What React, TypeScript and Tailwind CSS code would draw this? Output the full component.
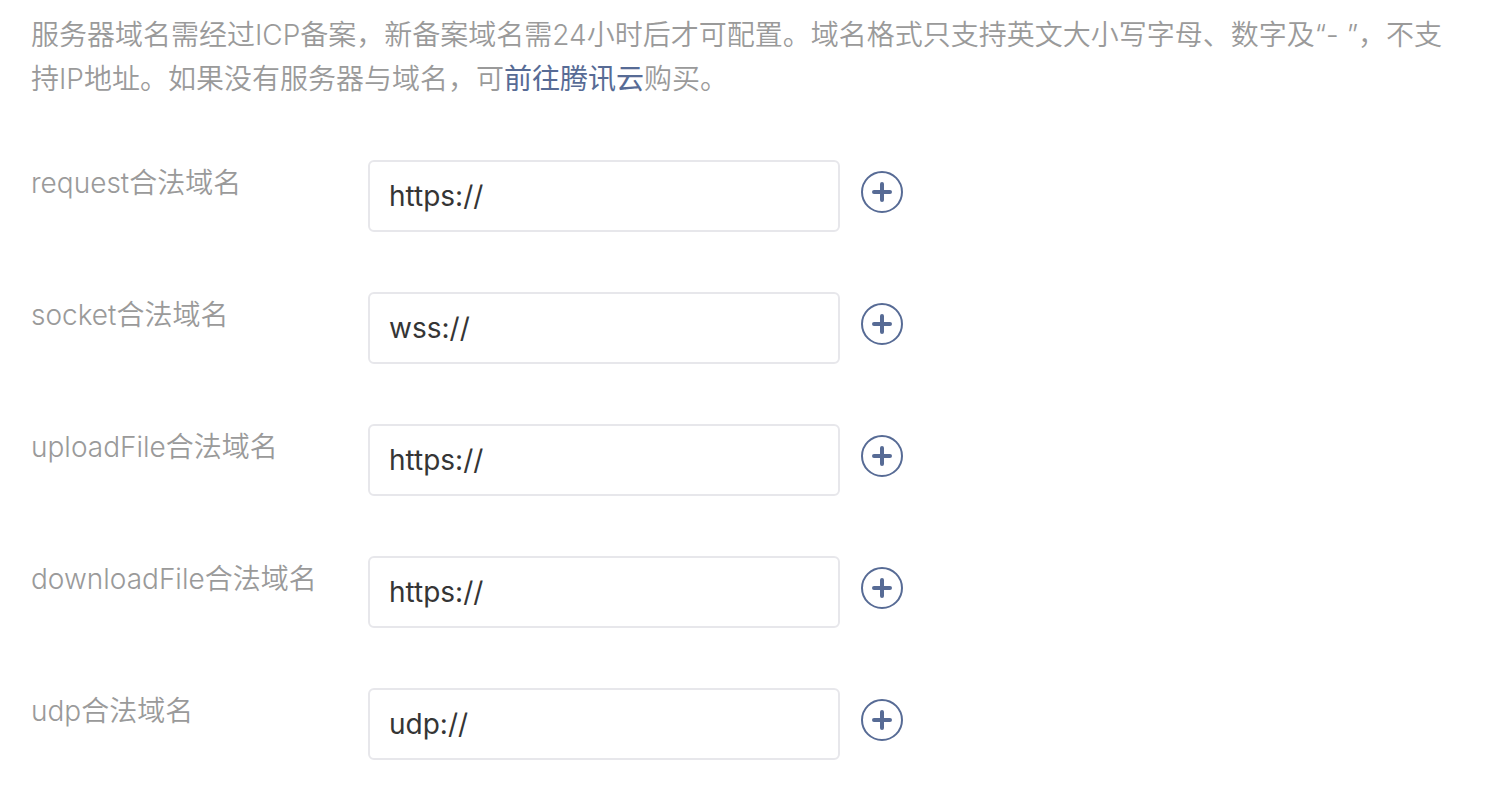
const domains = [
  { name: "request", value: "https://" },
  { name: "socket", value: "wss://" },
  { name: "uploadFile", value: "https://" },
  { name: "downloadFile", value: "https://" },
  { name: "udp", value: "udp://" },
];

function AddIcon() {
  return (
    <svg viewBox="0 0 42 42" className="size-[42px]" fill="none" stroke="currentColor" strokeLinecap="round" aria-hidden="true">
      <circle cx="21" cy="21" r="20" strokeWidth="2" />
      <path d="M21 13v16M13 21h16" strokeWidth="4" />
    </svg>
  );
}

function DomainRow({ name, value }: { name: string; value: string }) {
  return (
    <div className="flex items-start">
      <label htmlFor={name} className="mt-px w-[337px] shrink-0 font-[350] text-[#9a9a9a]">
        {name}合法域名
      </label>
      <input
        id={name}
        type="text"
        defaultValue={value}
        className="h-[72px] w-[472px] rounded-md border-2 border-[#e7e7eb] bg-white px-[19px] text-[#353535] outline-none"
      />
      <button type="button" aria-label="添加" className="mt-[11px] ml-[21px] text-[#576b95]">
        <AddIcon />
      </button>
    </div>
  );
}

export default function App() {
  return (
    <main className="min-h-screen bg-white px-[31px] pt-[13px] pb-7 font-[Inter,'Noto_Sans_CJK_SC',sans-serif] text-[28px] leading-[44px]">
      <p className="font-[350] text-[#9a9a9a]">
        服务器域名需经过ICP备案，新备案域名需24小时后才可配置。域名格式只支持英文大小写字母、数字及“- ”，不支持IP地址。如果没有服务器与域名，可<a href="#" className="font-normal text-[#576b95]">前往腾讯云</a>购买。
      </p>
      <form className="mt-[59px] flex flex-col gap-[60px]">
        {domains.map((d) => (
          <DomainRow key={d.name} {...d} />
        ))}
      </form>
    </main>
  );
}
